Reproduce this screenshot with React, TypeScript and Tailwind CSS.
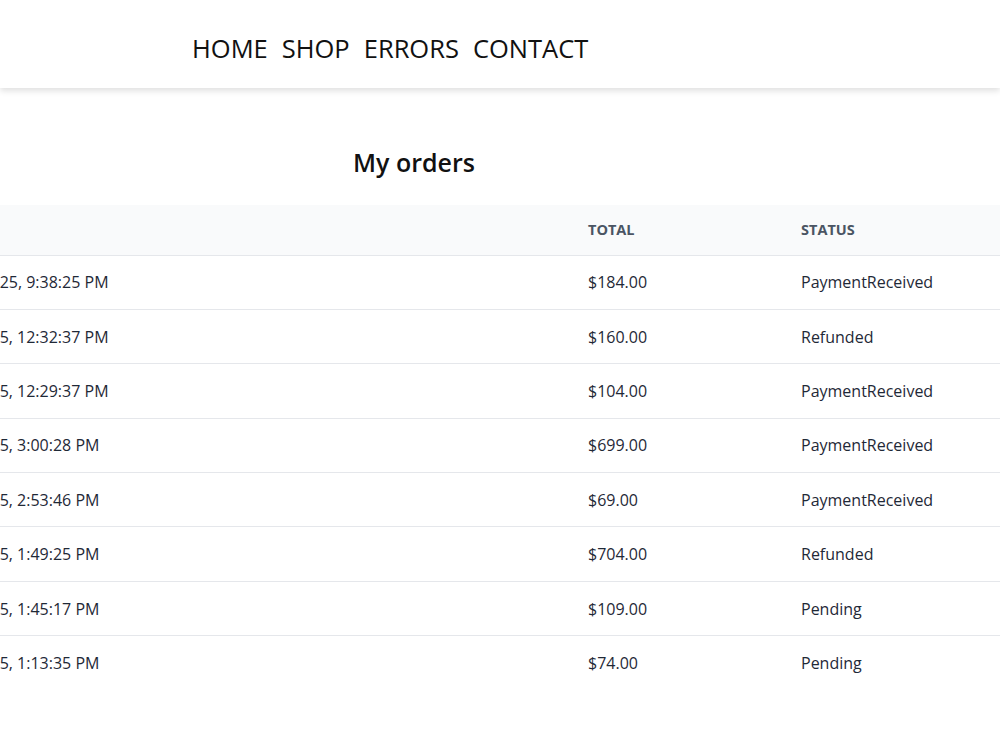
import React from 'react';

const orders = [
  { date: '11/17/2025, 9:38:25 PM', total: '$184.00', status: 'PaymentReceived' },
  { date: '11/9/2025, 12:32:37 PM', total: '$160.00', status: 'Refunded' },
  { date: '11/9/2025, 12:29:37 PM', total: '$104.00', status: 'PaymentReceived' },
  { date: '11/8/2025, 3:00:28 PM', total: '$699.00', status: 'PaymentReceived' },
  { date: '11/8/2025, 2:53:46 PM', total: '$69.00', status: 'PaymentReceived' },
  { date: '11/7/2025, 1:49:25 PM', total: '$704.00', status: 'Refunded' },
  { date: '11/7/2025, 1:45:17 PM', total: '$109.00', status: 'Pending' },
  { date: '11/6/2025, 1:13:35 PM', total: '$74.00', status: 'Pending' },
];

export default function App() {
  return (
    <div className="min-h-[750px] w-full overflow-hidden bg-white text-[#1f2937]" style={{ fontFamily: '"Open Sans", "Noto Sans", sans-serif' }}>
      {/* Top nav */}
      <header className="h-[88px] w-full bg-white shadow-[0_3px_6px_rgba(0,0,0,0.12)] flex items-center pt-[10px] pl-[192px]">
        <nav className="flex gap-[14px] text-[25.5px] text-[#111] leading-none">
          <a>HOME</a>
          <a>SHOP</a>
          <a>ERRORS</a>
          <a>CONTACT</a>
        </nav>
      </header>

      <main className="pt-[56px]">
        <h1 className="w-[828px] text-center text-[25px] font-semibold text-[#111] leading-[36px]">My orders</h1>

        {/* Orders table (page is scrolled horizontally) */}
        <div className="mt-[25px] w-full overflow-hidden">
          <table className="-ml-[91px] w-[1300px] border-collapse text-left text-[16px]">
            <thead className="bg-[#f9fafb]">
              <tr className="h-[50px] border-b border-[#e5e7eb]">
                <th className="w-[655px] px-6 text-[14.5px] font-bold uppercase text-[#4b5563]">Date</th>
                <th className="w-[213px] px-6 text-[14.5px] font-bold uppercase text-[#4b5563]">Total</th>
                <th className="px-6 text-[14.5px] font-bold uppercase text-[#4b5563]">Status</th>
              </tr>
            </thead>
            <tbody>
              {orders.map((o, i) => (
                <tr key={i} className={`h-[54.4px] ${i < orders.length - 1 ? 'border-b border-[#e5e7eb]' : ''}`}>
                  <td className="px-6 whitespace-nowrap">{o.date}</td>
                  <td className="px-6">{o.total}</td>
                  <td className="px-6">{o.status}</td>
                </tr>
              ))}
            </tbody>
          </table>
        </div>
      </main>
    </div>
  );
}
